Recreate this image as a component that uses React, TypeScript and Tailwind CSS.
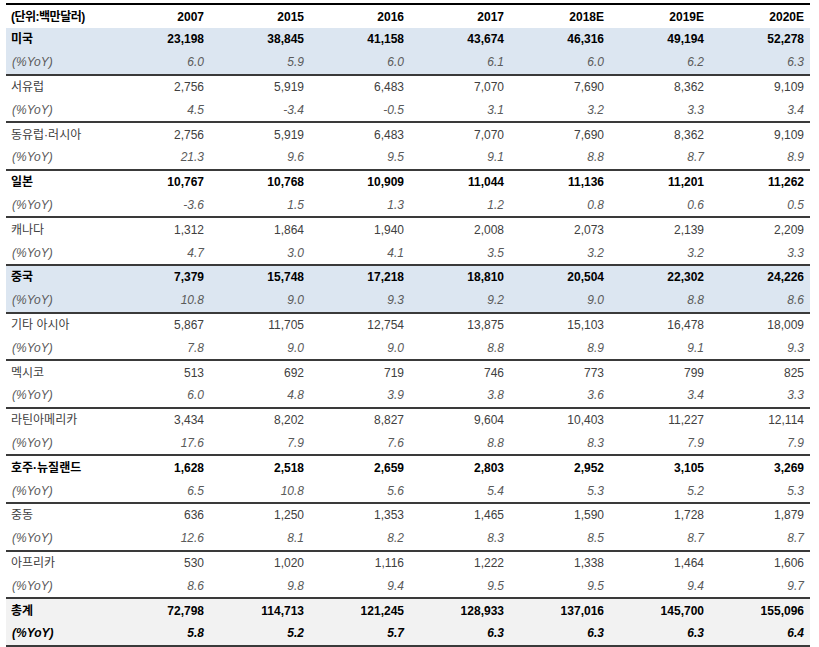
import React from "react";

type Group = {
    name: string;
    values: string[];
    yoy: string[];
    kind?: "blue" | "bold" | "total";
};

const years = ["2007", "2015", "2016", "2017", "2018E", "2019E", "2020E"];

const groups: Group[] = [
    { name: "미국", values: ["23,198", "38,845", "41,158", "43,674", "46,316", "49,194", "52,278"], yoy: ["6.0", "5.9", "6.0", "6.1", "6.0", "6.2", "6.3"], kind: "blue" },
    { name: "서유럽", values: ["2,756", "5,919", "6,483", "7,070", "7,690", "8,362", "9,109"], yoy: ["4.5", "-3.4", "-0.5", "3.1", "3.2", "3.3", "3.4"] },
    { name: "동유럽·러시아", values: ["2,756", "5,919", "6,483", "7,070", "7,690", "8,362", "9,109"], yoy: ["21.3", "9.6", "9.5", "9.1", "8.8", "8.7", "8.9"] },
    { name: "일본", values: ["10,767", "10,768", "10,909", "11,044", "11,136", "11,201", "11,262"], yoy: ["-3.6", "1.5", "1.3", "1.2", "0.8", "0.6", "0.5"], kind: "bold" },
    { name: "캐나다", values: ["1,312", "1,864", "1,940", "2,008", "2,073", "2,139", "2,209"], yoy: ["4.7", "3.0", "4.1", "3.5", "3.2", "3.2", "3.3"] },
    { name: "중국", values: ["7,379", "15,748", "17,218", "18,810", "20,504", "22,302", "24,226"], yoy: ["10.8", "9.0", "9.3", "9.2", "9.0", "8.8", "8.6"], kind: "blue" },
    { name: "기타 아시아", values: ["5,867", "11,705", "12,754", "13,875", "15,103", "16,478", "18,009"], yoy: ["7.8", "9.0", "9.0", "8.8", "8.9", "9.1", "9.3"] },
    { name: "멕시코", values: ["513", "692", "719", "746", "773", "799", "825"], yoy: ["6.0", "4.8", "3.9", "3.8", "3.6", "3.4", "3.3"] },
    { name: "라틴아메리카", values: ["3,434", "8,202", "8,827", "9,604", "10,403", "11,227", "12,114"], yoy: ["17.6", "7.9", "7.6", "8.8", "8.3", "7.9", "7.9"] },
    { name: "호주·뉴질랜드", values: ["1,628", "2,518", "2,659", "2,803", "2,952", "3,105", "3,269"], yoy: ["6.5", "10.8", "5.6", "5.4", "5.3", "5.2", "5.3"], kind: "bold" },
    { name: "중동", values: ["636", "1,250", "1,353", "1,465", "1,590", "1,728", "1,879"], yoy: ["12.6", "8.1", "8.2", "8.3", "8.5", "8.7", "8.7"] },
    { name: "아프리카", values: ["530", "1,020", "1,116", "1,222", "1,338", "1,464", "1,606"], yoy: ["8.6", "9.8", "9.4", "9.5", "9.5", "9.4", "9.7"] },
    { name: "총계", values: ["72,798", "114,713", "121,245", "128,933", "137,016", "145,700", "155,096"], yoy: ["5.8", "5.2", "5.7", "6.3", "6.3", "6.3", "6.4"], kind: "total" },
];

const rowGrid = "grid grid-cols-[104px_repeat(7,100px)] items-center h-[22.8px]";

export default function App() {
    return (
        <main className="bg-white w-[819px] h-[647px] pl-[6px] pt-[3px] font-['Liberation_Sans','Noto_Sans_CJK_KR',sans-serif] text-[12px]">
            <div className="w-[804px]">
                <div className={`${rowGrid} h-[25px] border-t-2 border-black font-bold text-black`}>
                    <div className="pl-[5px] tracking-[-0.5px]">(단위:백만달러)</div>
                    {years.map((y) => (
                        <div key={y} className="text-right pr-[6px]">{y}</div>
                    ))}
                </div>

                {groups.map((g) => {
                    const bg = g.kind === "blue" ? "bg-[#dce6f1]" : g.kind === "total" ? "bg-[#f2f2f2]" : "bg-white";
                    const strong = g.kind !== undefined;
                    return (
                        <div key={g.name} className={`${bg} border-b-2 border-[#3a3a3a]`}>
                            <div className={`${rowGrid} ${strong ? "font-bold text-black" : "text-[#404040]"}`}>
                                <div className="pl-[5px]">{g.name}</div>
                                {g.values.map((v, i) => (
                                    <div key={i} className="text-right pr-[6px]">{v}</div>
                                ))}
                            </div>
                            <div className={`${rowGrid} italic ${g.kind === "total" ? "font-bold text-black" : "text-[#5a5a5a]"}`}>
                                <div className="pl-[6px]">(%YoY)</div>
                                {g.yoy.map((v, i) => (
                                    <div key={i} className="text-right pr-[6px]">{v}</div>
                                ))}
                            </div>
                        </div>
                    );
                })}
            </div>
        </main>
    );
}
